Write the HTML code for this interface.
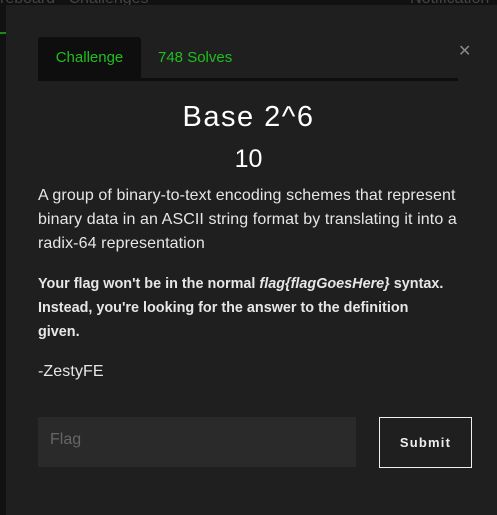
<!DOCTYPE html>
<html><head><style>
body{margin:0;width:497px;height:515px;background:#111;position:relative;overflow:hidden;font-family:"Liberation Sans",sans-serif;}
.nav{position:absolute;top:-10px;left:0;color:#444;font-size:16px;white-space:nowrap}
.modal{position:absolute;left:6px;top:5px;width:491px;height:510px;background:#1f1f1f;}
.green{position:absolute;left:0;top:32px;width:6px;height:2px;background:#1a8a1a}
.tab{position:absolute;top:32px;height:41px;line-height:41px;color:#1fbf1f;font-size:15px}
.t1{left:32px;width:103px;background:#0e0e0e;text-align:center;border-radius:3px 3px 0 0}
.t2{left:152px}
.line{position:absolute;left:32px;top:73px;width:420px;height:3px;background:#0e0e0e}
.x{position:absolute;left:452px;top:36px;color:#888;font-size:16px}
h1{position:absolute;top:101px;left:0;width:497px;margin:0;text-align:center;color:#fff;font-weight:normal;font-size:29px;letter-spacing:1.5px}
.pts{position:absolute;top:145px;left:0;width:497px;text-align:center;color:#fff;font-size:25px}
.body{position:absolute;left:38px;top:184px;color:#e6e6e6;font-size:16px;line-height:24px;white-space:nowrap;letter-spacing:0.1px}
.body p{margin:0 0 16px}
.body b{font-size:14.4px;letter-spacing:0}
.in{position:absolute;left:38px;top:417px;width:318px;height:50px;background:#2a2a2a;color:#666;font-size:16px;line-height:46px;box-sizing:border-box;padding-left:12px}
.btn{position:absolute;left:379px;top:417px;width:93px;height:51px;box-sizing:border-box;border:1px solid #eee;color:#eee;font-size:13px;font-weight:bold;letter-spacing:1.2px;text-align:center;line-height:49px}
</style></head><body>
<div class="nav"><span>reboard &nbsp; Challenges</span><span style="position:absolute;left:400px">▪ Notification</span></div>
<div class="green"></div>
<div class="modal">
<div class="tab t1">Challenge</div><div class="tab t2">748 Solves</div>
<div class="line"></div>
<div class="x">✕</div>
</div>
<h1>Base 2^6</h1>
<div class="pts">10</div>
<div class="body">
<p>A group of binary-to-text encoding schemes that represent<br>binary data in an ASCII string format by translating it into a<br>radix-64 representation</p>
<p><b>Your flag won't be in the normal <i>flag{flagGoesHere}</i> syntax.<br>Instead, you're looking for the answer to the definition<br>given.</b></p>
<p>-ZestyFE</p>
</div>
<div class="in">Flag</div>
<div class="btn">Submit</div>
</body></html>
